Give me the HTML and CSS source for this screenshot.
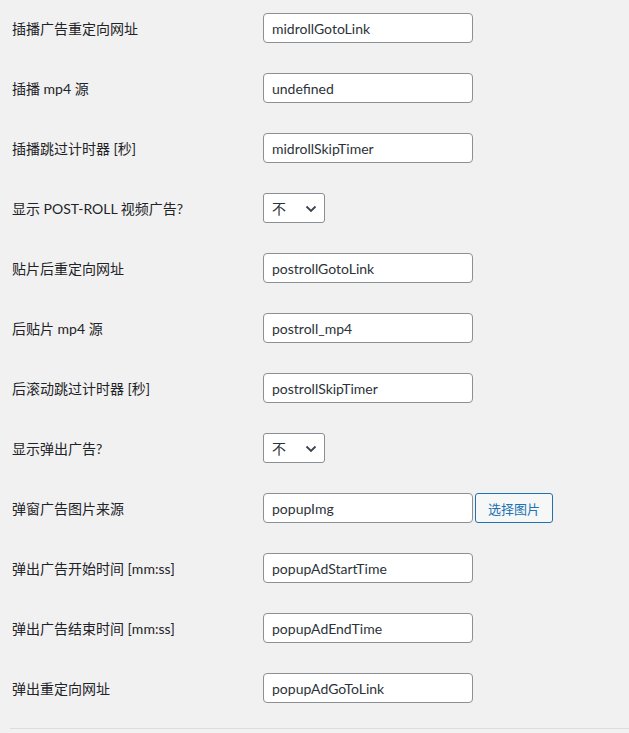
FILE: index.html
```html
<!DOCTYPE html>
<html lang="zh-CN">
<head>
    <meta charset="UTF-8">
    <meta name="viewport" content="width=device-width, initial-scale=1.0">
    <title>视频广告设置</title>
    <link rel="stylesheet" href="styles.css">
</head>
<body>

<div class="settings">
    <div class="row">
        <label class="label" for="midrollGotoLink">插播广告重定向网址</label>
        <input class="text" type="text" id="midrollGotoLink" value="midrollGotoLink">
    </div>
    <div class="row">
        <label class="label" for="midrollMp4">插播 mp4 源</label>
        <input class="text" type="text" id="midrollMp4" value="undefined">
    </div>
    <div class="row">
        <label class="label" for="midrollSkipTimer">插播跳过计时器 [秒]</label>
        <input class="text" type="text" id="midrollSkipTimer" value="midrollSkipTimer">
    </div>
    <div class="row">
        <label class="label" for="showPostroll">显示 POST-ROLL 视频广告?</label>
        <span class="select-wrap">
            <select class="select" id="showPostroll">
                <option>不</option>
                <option>是</option>
            </select>
            <svg class="chevron" width="12" height="8" viewBox="0 0 12 8"><path d="M1.5 1.5 L6 6 L10.5 1.5" fill="none" stroke="#3c434a" stroke-width="1.8"/></svg>
        </span>
    </div>
    <div class="row">
        <label class="label" for="postrollGotoLink">贴片后重定向网址</label>
        <input class="text" type="text" id="postrollGotoLink" value="postrollGotoLink">
    </div>
    <div class="row">
        <label class="label" for="postrollMp4">后贴片 mp4 源</label>
        <input class="text" type="text" id="postrollMp4" value="postroll_mp4">
    </div>
    <div class="row">
        <label class="label" for="postrollSkipTimer">后滚动跳过计时器 [秒]</label>
        <input class="text" type="text" id="postrollSkipTimer" value="postrollSkipTimer">
    </div>
    <div class="row">
        <label class="label" for="showPopup">显示弹出广告?</label>
        <span class="select-wrap">
            <select class="select" id="showPopup">
                <option>不</option>
                <option>是</option>
            </select>
            <svg class="chevron" width="12" height="8" viewBox="0 0 12 8"><path d="M1.5 1.5 L6 6 L10.5 1.5" fill="none" stroke="#3c434a" stroke-width="1.8"/></svg>
        </span>
    </div>
    <div class="row">
        <label class="label" for="popupImg">弹窗广告图片来源</label>
        <input class="text" type="text" id="popupImg" value="popupImg">
        <button class="button" type="button">选择图片</button>
    </div>
    <div class="row">
        <label class="label" for="popupAdStartTime">弹出广告开始时间 [mm:ss]</label>
        <input class="text" type="text" id="popupAdStartTime" value="popupAdStartTime">
    </div>
    <div class="row">
        <label class="label" for="popupAdEndTime">弹出广告结束时间 [mm:ss]</label>
        <input class="text" type="text" id="popupAdEndTime" value="popupAdEndTime">
    </div>
    <div class="row">
        <label class="label" for="popupAdGoToLink">弹出重定向网址</label>
        <input class="text" type="text" id="popupAdGoToLink" value="popupAdGoToLink">
    </div>
    <hr class="divider">
</div>

</body>
</html>
```

FILE: styles.css
```css
body {
    margin: 0;
    background: #f1f1f1;
    color: #1d2327;
    font-family: Lato, "Noto Sans CJK SC", sans-serif;
    font-size: 14px;
}
.settings {
    margin-top: -2px;
    padding-left: 10px;
}
.row {
    display: flex;
    align-items: center;
    height: 60px;
}
.label {
    width: 251px;
    padding-left: 2px;
    flex-shrink: 0;
}
.text {
    box-sizing: border-box;
    width: 210px;
    height: 30px;
    padding: 0 8px;
    border: 1px solid #8c8f94;
    border-radius: 4px;
    background: #fff;
    color: #2c3338;
    font-family: inherit;
    font-size: 14px;
}
.select-wrap {
    position: relative;
    display: inline-block;
}
.select {
    box-sizing: border-box;
    width: 62px;
    height: 30px;
    padding: 0 8px;
    border: 1px solid #8c8f94;
    border-radius: 3px;
    background: #fff;
    color: #2c3338;
    font-family: inherit;
    font-size: 14px;
    appearance: none;
    -webkit-appearance: none;
}
.chevron {
    position: absolute;
    top: 12px;
    left: 42px;
    pointer-events: none;
}
.button {
    box-sizing: border-box;
    height: 30px;
    margin-left: 2px;
    padding: 0 12px;
    border: 1px solid #2271b1;
    border-radius: 3px;
    background: #f6f7f7;
    color: #2271b1;
    font-family: inherit;
    font-size: 13px;
    cursor: pointer;
}
.divider {
    margin: 10px 0 0;
    border: none;
    border-top: 1px solid #dcdcde;
}
```
